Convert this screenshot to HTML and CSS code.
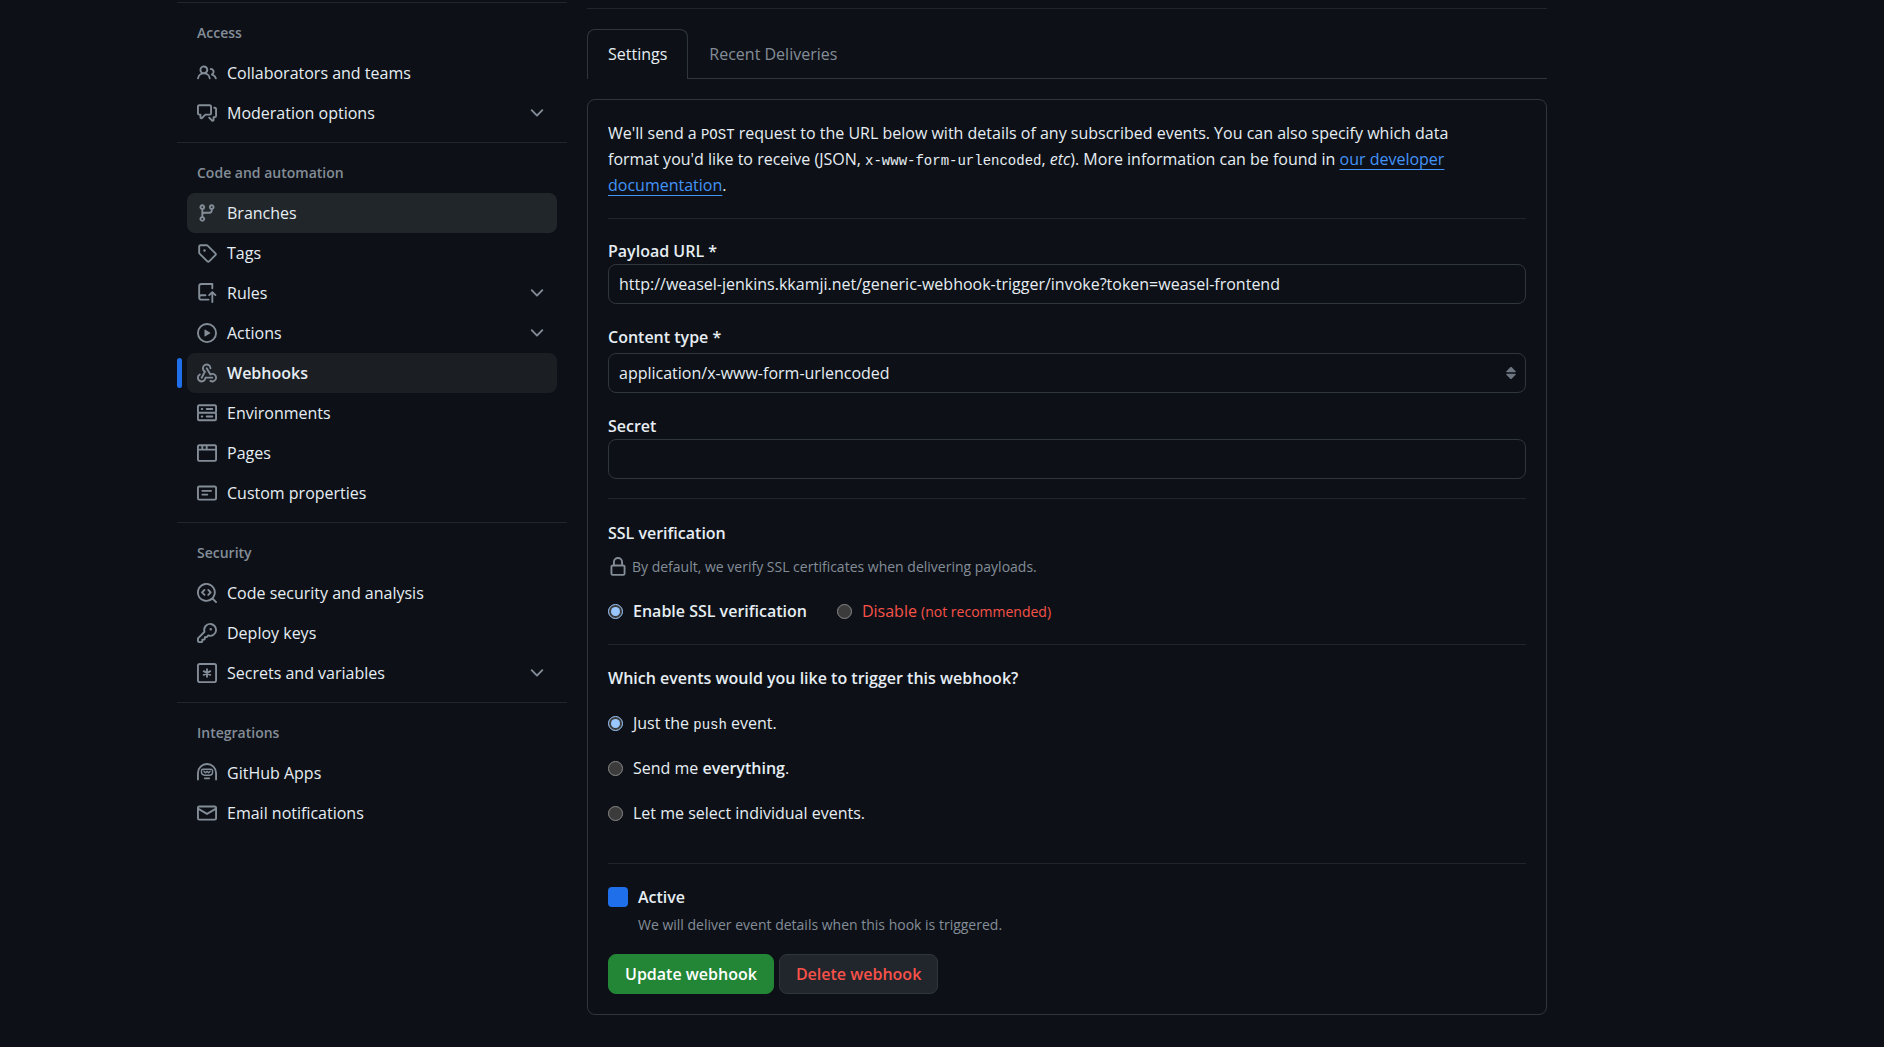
FILE: index.html
```
<!DOCTYPE html>
<html lang="en">
<head>
    <meta charset="UTF-8">
    <meta name="viewport" content="width=device-width, initial-scale=1.0">
    <title>Webhooks · Manage webhook</title>
    <link rel="stylesheet" href="styles.css">
</head>
<body>
    <!-- shared chevron for the expandable items -->
    <svg class="sprite" aria-hidden="true">
        <symbol id="chevron" viewBox="0 0 16 16">
            <path d="M12.78 5.22a.749.749 0 0 1 0 1.06l-4.25 4.25a.749.749 0 0 1-1.06 0L3.22 6.28a.749.749 0 1 1 1.06-1.06L8 8.939l3.72-3.719a.749.749 0 0 1 1.06 0Z"/>
        </symbol>
    </svg>

    <div class="layout">
        <nav class="sidebar" aria-label="Repository settings">
            <section class="nav-group">
                <h2 class="nav-title">Access</h2>
                <a href="#" class="nav-item">
                    <svg class="icon" viewBox="0 0 16 16"><path d="M2 5.5a3.5 3.5 0 1 1 5.898 2.549 5.508 5.508 0 0 1 3.034 4.084.75.75 0 1 1-1.482.235 4 4 0 0 0-7.9 0 .75.75 0 0 1-1.482-.236A5.507 5.507 0 0 1 3.102 8.05 3.493 3.493 0 0 1 2 5.5ZM11 4a3.001 3.001 0 0 1 2.22 5.018 5.01 5.01 0 0 1 2.56 3.012.749.749 0 0 1-.885.954.752.752 0 0 1-.549-.514 3.507 3.507 0 0 0-2.522-2.372.75.75 0 0 1-.574-.73v-.352a.75.75 0 0 1 .416-.672A1.5 1.5 0 0 0 11 5.5.75.75 0 0 1 11 4Zm-5.5-.5a2 2 0 1 0-.001 3.999A2 2 0 0 0 5.5 3.5Z"/></svg>
                    <span>Collaborators and teams</span>
                </a>
                <button type="button" class="nav-item">
                    <svg class="icon" viewBox="0 0 16 16"><path d="M1.75 1h8.5c.966 0 1.75.784 1.75 1.75v5.5A1.75 1.75 0 0 1 10.25 10H7.061l-2.574 2.573A1.458 1.458 0 0 1 2 11.543V10h-.25A1.75 1.75 0 0 1 0 8.25v-5.5C0 1.784.784 1 1.75 1ZM1.5 2.75v5.5c0 .138.112.25.25.25h1a.75.75 0 0 1 .75.75v2.19l2.72-2.72a.749.749 0 0 1 .53-.22h3.5a.25.25 0 0 0 .25-.25v-5.5a.25.25 0 0 0-.25-.25h-8.5a.25.25 0 0 0-.25.25Zm13 2a.25.25 0 0 0-.25-.25h-.5a.75.75 0 0 1 0-1.5h.5c.966 0 1.75.784 1.75 1.75v5.5A1.75 1.75 0 0 1 14.25 12H14v1.543a1.458 1.458 0 0 1-2.487 1.03L9.22 12.28a.749.749 0 0 1 .326-1.275.749.749 0 0 1 .734.215l2.22 2.22v-2.19a.75.75 0 0 1 .75-.75h1a.25.25 0 0 0 .25-.25Z"/></svg>
                    <span>Moderation options</span>
                    <svg class="icon chevron"><use href="#chevron"/></svg>
                </button>
            </section>

            <section class="nav-group">
                <h2 class="nav-title">Code and automation</h2>
                <a href="#" class="nav-item hovered">
                    <svg class="icon" viewBox="0 0 16 16"><path d="M9.5 3.25a2.25 2.25 0 1 1 3 2.122V6A2.5 2.5 0 0 1 10 8.5H6a1 1 0 0 0-1 1v1.128a2.251 2.251 0 1 1-1.5 0V5.372a2.25 2.25 0 1 1 1.5 0v1.836A2.493 2.493 0 0 1 6 7h4a1 1 0 0 0 1-1v-.628A2.25 2.25 0 0 1 9.5 3.25Zm-6 0a.75.75 0 1 0 1.5 0 .75.75 0 0 0-1.5 0Zm8.25-.75a.75.75 0 1 0 0 1.5.75.75 0 0 0 0-1.5ZM4.25 12a.75.75 0 1 0 0 1.5.75.75 0 0 0 0-1.5Z"/></svg>
                    <span>Branches</span>
                </a>
                <a href="#" class="nav-item">
                    <svg class="icon" viewBox="0 0 16 16"><path d="M1 7.775V2.75C1 1.784 1.784 1 2.75 1h5.025c.464 0 .91.184 1.238.513l6.25 6.25a1.75 1.75 0 0 1 0 2.474l-5.026 5.026a1.75 1.75 0 0 1-2.474 0l-6.25-6.25A1.752 1.752 0 0 1 1 7.775Zm1.5 0c0 .066.026.13.073.177l6.25 6.25a.25.25 0 0 0 .354 0l5.025-5.025a.25.25 0 0 0 0-.354l-6.25-6.25a.25.25 0 0 0-.177-.073H2.75a.25.25 0 0 0-.25.25ZM6 5a1 1 0 1 1 0 2 1 1 0 0 1 0-2Z"/></svg>
                    <span>Tags</span>
                </a>
                <button type="button" class="nav-item">
                    <svg class="icon" viewBox="0 0 16 16"><path d="M1 2.5A2.5 2.5 0 0 1 3.5 0h8.75a.75.75 0 0 1 .75.75v3.5a.75.75 0 0 1-1.5 0V1.5h-8a1 1 0 0 0-1 1v6.708A2.493 2.493 0 0 1 3.5 9h3.25a.75.75 0 0 1 0 1.5H3.5a1 1 0 0 0 0 2h5.75a.75.75 0 0 1 0 1.5H3.5A2.5 2.5 0 0 1 1 11.5Zm13.23 7.79h-.001l-1.224-1.224v6.184a.75.75 0 0 1-1.5 0V9.066L10.28 10.29a.75.75 0 0 1-1.06-1.061l2.505-2.504a.75.75 0 0 1 1.06 0L15.29 9.23a.751.751 0 0 1-.018 1.042.751.751 0 0 1-1.042.018Z"/></svg>
                    <span>Rules</span>
                    <svg class="icon chevron"><use href="#chevron"/></svg>
                </button>
                <button type="button" class="nav-item">
                    <svg class="icon" viewBox="0 0 16 16"><path d="M8 0a8 8 0 1 1 0 16A8 8 0 0 1 8 0ZM1.5 8a6.5 6.5 0 1 0 13 0 6.5 6.5 0 0 0-13 0Zm4.879-2.773 4.264 2.559a.25.25 0 0 1 0 .428l-4.264 2.559A.25.25 0 0 1 6 10.559V5.442a.25.25 0 0 1 .379-.215Z"/></svg>
                    <span>Actions</span>
                    <svg class="icon chevron"><use href="#chevron"/></svg>
                </button>
                <a href="#" class="nav-item current" aria-current="page">
                    <svg class="icon" viewBox="0 0 16 16"><path d="M5.5 4.25a2.25 2.25 0 0 1 4.5 0 .75.75 0 0 0 1.5 0 3.75 3.75 0 1 0-6.14 2.889l-2.272 4.258a.75.75 0 0 0 1.324.706L7 7.25a.75.75 0 0 0-.309-1.015A2.25 2.25 0 0 1 5.5 4.25Z"/><path d="M7.364 3.607a.75.75 0 0 1 1.03.257l2.608 4.349a3.75 3.75 0 1 1-.628 6.785.75.75 0 0 1 .752-1.299 2.25 2.25 0 1 0-.033-3.88.75.75 0 0 1-1.03-.256L7.107 4.636a.75.75 0 0 1 .257-1.03Z"/><path d="M2.9 8.776A.75.75 0 0 1 2.625 9.8 2.25 2.25 0 1 0 6 11.75a.75.75 0 0 1 .75-.751h5.5a.75.75 0 0 1 0 1.5H7.425a3.751 3.751 0 1 1-5.55-3.998.75.75 0 0 1 1.024.274Z"/></svg>
                    <span>Webhooks</span>
                </a>
                <a href="#" class="nav-item">
                    <svg class="icon" viewBox="0 0 16 16"><path d="M1.75 1h12.5c.966 0 1.75.784 1.75 1.75v4c0 .372-.116.717-.314 1 .198.283.314.628.314 1v4a1.75 1.75 0 0 1-1.75 1.75H1.75A1.75 1.75 0 0 1 0 12.75v-4c0-.358.109-.707.314-1a1.739 1.739 0 0 1-.314-1v-4C0 1.784.784 1 1.75 1ZM1.5 2.75v4c0 .138.112.25.25.25h12.5a.25.25 0 0 0 .25-.25v-4a.25.25 0 0 0-.25-.25H1.75a.25.25 0 0 0-.25.25Zm.25 5.75a.25.25 0 0 0-.25.25v4c0 .138.112.25.25.25h12.5a.25.25 0 0 0 .25-.25v-4a.25.25 0 0 0-.25-.25ZM7 4.75A.75.75 0 0 1 7.75 4h4.5a.75.75 0 0 1 0 1.5h-4.5A.75.75 0 0 1 7 4.75ZM7.75 10h4.5a.75.75 0 0 1 0 1.5h-4.5a.75.75 0 0 1 0-1.5ZM3 4.75A.75.75 0 0 1 3.75 4h.5a.75.75 0 0 1 0 1.5h-.5A.75.75 0 0 1 3 4.75ZM3.75 10h.5a.75.75 0 0 1 0 1.5h-.5a.75.75 0 0 1 0-1.5Z"/></svg>
                    <span>Environments</span>
                </a>
                <a href="#" class="nav-item">
                    <svg class="icon" viewBox="0 0 16 16"><path d="M0 2.75C0 1.784.784 1 1.75 1h12.5c.966 0 1.75.784 1.75 1.75v10.5A1.75 1.75 0 0 1 14.25 15H1.75A1.75 1.75 0 0 1 0 13.25ZM14.5 6h-13v7.25c0 .138.112.25.25.25h12.5a.25.25 0 0 0 .25-.25Zm-6-3.5v2h6V2.75a.25.25 0 0 0-.25-.25ZM5 2.5v2h2v-2Zm-3.25 0a.25.25 0 0 0-.25.25V4.5h2v-2Z"/></svg>
                    <span>Pages</span>
                </a>
                <a href="#" class="nav-item">
                    <svg class="icon" viewBox="0 0 16 16"><path d="M0 3.75C0 2.784.784 2 1.75 2h12.5c.966 0 1.75.784 1.75 1.75v8.5A1.75 1.75 0 0 1 14.25 14H1.75A1.75 1.75 0 0 1 0 12.25Zm1.75-.25a.25.25 0 0 0-.25.25v8.5c0 .138.112.25.25.25h12.5a.25.25 0 0 0 .25-.25v-8.5a.25.25 0 0 0-.25-.25ZM3.5 6.25a.75.75 0 0 1 .75-.75h7a.75.75 0 0 1 0 1.5h-7a.75.75 0 0 1-.75-.75Zm.75 2.25h4a.75.75 0 0 1 0 1.5h-4a.75.75 0 0 1 0-1.5Z"/></svg>
                    <span>Custom properties</span>
                </a>
            </section>

            <section class="nav-group">
                <h2 class="nav-title">Security</h2>
                <a href="#" class="nav-item">
                    <svg class="icon" viewBox="0 0 16 16"><path d="M8.47 4.97a.75.75 0 0 0 0 1.06L9.94 7.5 8.47 8.97a.75.75 0 1 0 1.06 1.06l2-2a.75.75 0 0 0 0-1.06l-2-2a.75.75 0 0 0-1.06 0ZM6.53 6.03a.75.75 0 0 0-1.06-1.06l-2 2a.75.75 0 0 0 0 1.06l2 2a.75.75 0 1 0 1.06-1.06L5.06 7.5l1.47-1.47Z"/><path d="M12.246 13.307a7.501 7.501 0 1 1 1.06-1.06l2.474 2.473a.749.749 0 0 1-.326 1.275.749.749 0 0 1-.734-.215ZM1.5 7.5a6.002 6.002 0 0 0 3.608 5.504 6.002 6.002 0 0 0 6.486-1.117.748.748 0 0 1 .292-.293A6 6 0 1 0 1.5 7.5Z"/></svg>
                    <span>Code security and analysis</span>
                </a>
                <a href="#" class="nav-item">
                    <svg class="icon" viewBox="0 0 16 16"><path d="M10.5 0a5.499 5.499 0 1 1-1.288 10.848l-.932.932a.749.749 0 0 1-.53.22H7v.75a.749.749 0 0 1-.22.53l-.5.5a.749.749 0 0 1-.53.22H5v.75a.749.749 0 0 1-.22.53l-.5.5a.749.749 0 0 1-.53.22h-2A1.75 1.75 0 0 1 0 14.25v-2c0-.199.079-.389.22-.53l4.932-4.932A5.5 5.5 0 0 1 10.5 0Zm-4 5.5c-.001.431.069.86.205 1.269a.75.75 0 0 1-.181.768L1.5 12.56v1.69c0 .138.112.25.25.25h1.69l.06-.06v-1.19a.75.75 0 0 1 .75-.75h1.19l.06-.06v-1.19a.75.75 0 0 1 .75-.75h1.19l1.023-1.025a.75.75 0 0 1 .768-.18A4 4 0 1 0 6.5 5.5ZM11 6a1 1 0 1 1 0-2 1 1 0 0 1 0 2Z"/></svg>
                    <span>Deploy keys</span>
                </a>
                <button type="button" class="nav-item">
                    <svg class="icon line" viewBox="0 0 16 16"><rect x=".75" y=".75" width="14.5" height="14.5" rx="1.5"/><path d="M8 5v6M5.4 6.500l5.200 3M10.600 6.500l-5.200 3"/></svg>
                    <span>Secrets and variables</span>
                    <svg class="icon chevron"><use href="#chevron"/></svg>
                </button>
            </section>

            <section class="nav-group">
                <h2 class="nav-title">Integrations</h2>
                <a href="#" class="nav-item">
                    <svg class="icon line" viewBox="0 0 16 16"><path d="M.75 13.25V8a7.25 7.25 0 0 1 14.5 0v5.25M6.25 12.25h3.5"/><path class="thin" d="M4.75 5h6.5a1.200 1.200 0 0 1 1.200 1.200v1.100a2.500 2.500 0 0 1-2.500 2.500h-3.900a2.500 2.500 0 0 1-2.500-2.500v-1.100a1.200 1.200 0 0 1 1.200-1.200ZM5.500 6.600 6.750 7.800 8 6.700l1.250 1.100 1.250-1.200"/></svg>
                    <span>GitHub Apps</span>
                </a>
                <a href="#" class="nav-item">
                    <svg class="icon" viewBox="0 0 16 16"><path d="M1.75 2h12.5c.966 0 1.75.784 1.75 1.75v8.5A1.75 1.75 0 0 1 14.25 14H1.75A1.75 1.75 0 0 1 0 12.25v-8.5C0 2.784.784 2 1.75 2ZM1.5 12.251c0 .138.112.25.25.25h12.5a.25.25 0 0 0 .25-.25V5.809L8.38 9.397a.75.75 0 0 1-.76 0L1.5 5.809v6.442Zm13-8.181v-.32a.25.25 0 0 0-.25-.25H1.75a.25.25 0 0 0-.25.25v.32L8 7.88Z"/></svg>
                    <span>Email notifications</span>
                </a>
            </section>
        </nav>

        <main class="content">
            <nav class="tabs" aria-label="Webhook">
                <a href="#" class="tab selected" aria-current="page">Settings</a>
                <a href="#" class="tab">Recent Deliveries</a>
            </nav>

            <form class="box">
                <p class="intro">We'll send a <code>POST</code> request to the URL below with details of any subscribed events. You can also specify which data format you'd like to receive (JSON, <code>x-www-form-urlencoded</code>, <em>etc</em>). More information can be found in <a href="#">our developer documentation</a>.</p>

                <div class="fields">
                    <div class="field">
                        <label for="payload-url">Payload URL *</label>
                        <input type="text" id="payload-url" class="control" value="http://weasel-jenkins.kkamji.net/generic-webhook-trigger/invoke?token=weasel-frontend">
                    </div>
                    <div class="field">
                        <label for="content-type">Content type *</label>
                        <div class="select-wrap">
                            <select id="content-type" class="control">
                                <option>application/x-www-form-urlencoded</option>
                                <option>application/json</option>
                            </select>
                            <svg class="select-arrow" viewBox="0 0 10 12"><path d="M4 .4a1.4 1.4 0 0 1 2 0L9.6 4.200c.5.5.2 1-.4 1H.8c-.6 0-.9-.5-.4-1ZM4 11.600a1.400 1.400 0 0 0 2 0L9.600 7.800c.5-.5.2-1-.4-1H.8c-.6 0-.9.5-.4 1Z"/></svg>
                        </div>
                    </div>
                    <div class="field">
                        <label for="secret">Secret</label>
                        <input type="text" id="secret" class="control">
                    </div>
                </div>

                <section class="ssl">
                    <h3>SSL verification</h3>
                    <p class="note">
                        <svg class="icon" viewBox="0 0 16 16"><path d="M4 4a4 4 0 0 1 8 0v2h.25c.966 0 1.75.784 1.75 1.75v5.5A1.75 1.75 0 0 1 12.25 15h-8.5A1.75 1.75 0 0 1 2 13.25v-5.5C2 6.784 2.784 6 3.75 6H4Zm8.25 3.5h-8.5a.25.25 0 0 0-.25.25v5.5c0 .138.112.25.25.25h8.5a.25.25 0 0 0 .25-.25v-5.5a.25.25 0 0 0-.25-.25ZM10.5 6V4a2.5 2.5 0 1 0-5 0v2Z"/></svg>
                        By default, we verify SSL certificates when delivering payloads.
                    </p>
                    <div class="ssl-options">
                        <label class="choice"><input type="radio" name="ssl" checked><strong>Enable SSL verification</strong></label>
                        <label class="choice danger"><input type="radio" name="ssl"><span>Disable <small>(not recommended)</small></span></label>
                    </div>
                </section>

                <section class="events">
                    <h3>Which events would you like to trigger this webhook?</h3>
                    <label class="choice"><input type="radio" name="events" checked><span>Just the <code>push</code> event.</span></label>
                    <label class="choice"><input type="radio" name="events"><span>Send me <strong>everything</strong>.</span></label>
                    <label class="choice"><input type="radio" name="events"><span>Let me select individual events.</span></label>
                </section>

                <section class="active">
                    <input type="checkbox" id="active" checked>
                    <label for="active">Active</label>
                    <p>We will deliver event details when this hook is triggered.</p>
                </section>

                <div class="actions">
                    <button type="submit" class="btn btn-primary">Update webhook</button>
                    <button type="button" class="btn btn-danger">Delete webhook</button>
                </div>
            </form>
        </main>
    </div>
</body>
</html>
```
FILE: styles.css
```
* {
    margin: 0;
    padding: 0;
    box-sizing: border-box;
}

:root {
    color-scheme: dark;
    --bg: #0d1117;
    --text: #e6edf3;
    --muted: #848d97;
    --border: #30363d;
    --border-muted: #21262d;
    --blue: #1f6feb;
    --link: #4493f8;
    --red: #f85149;
}

body {
    font-family: 'Segoe UI', 'Open Sans', 'Noto Sans', sans-serif;
    font-size: 16px;
    line-height: 26px;
    color: var(--text);
    background: var(--bg);
}

button,
input,
select {
    font: inherit;
    color: inherit;
}

code {
    font-family: 'Liberation Mono', monospace;
    font-size: 14px;
    line-height: 1;
}

.sprite {
    display: none;
}

.icon {
    flex: none;
    width: 20px;
    height: 20px;
    fill: var(--muted);
}

.icon.line {
    fill: none;
    stroke: var(--muted);
    stroke-width: 1.5;
    stroke-linecap: round;
    stroke-linejoin: round;
}

.icon .thin {
    stroke-width: 1.1;
}

.layout {
    display: grid;
    grid-template-columns: 390px minmax(0, 1fr);
    gap: 20px;
    padding: 2px 337px 32px 177px;
}

/* Sidebar */
.nav-group {
    padding: 10px 10px 9px;
    border-top: 1px solid var(--border-muted);
}

.nav-title {
    padding: 10px;
    font-size: 14px;
    font-weight: 600;
    line-height: 20px;
    color: var(--muted);
}

.nav-item {
    position: relative;
    display: flex;
    align-items: center;
    gap: 10px;
    width: 100%;
    height: 40px;
    padding: 0 10px;
    border: none;
    border-radius: 8px;
    background: none;
    text-align: left;
    text-decoration: none;
    color: var(--text);
    cursor: pointer;
}

.nav-item:hover,
.nav-item.hovered {
    background: #21262a;
}

.nav-item.current {
    background: #1b1f24;
    font-weight: 600;
}

.nav-item.current::before {
    content: '';
    position: absolute;
    top: 5px;
    left: -10px;
    width: 5px;
    height: 30px;
    border-radius: 8px;
    background: var(--blue);
}

.chevron {
    margin-left: auto;
}

/* Main column */
.content {
    margin-top: 6px;
    padding-top: 20px;
    border-top: 1px solid var(--border-muted);
}

.tabs {
    display: flex;
    margin-bottom: 20px;
    box-shadow: inset 0 -1px 0 var(--border);
}

.tab {
    height: 50px;
    padding: 11px 20px;
    border: 1px solid transparent;
    border-bottom: none;
    text-decoration: none;
    color: var(--muted);
}

.tab.selected {
    border-color: var(--border);
    border-radius: 8px 8px 0 0;
    background: var(--bg);
    color: var(--text);
}

.box {
    padding: 20px;
    border: 1px solid var(--border);
    border-radius: 8px;
}

.intro {
    padding: 0 40px 20px 0;
}

.intro a {
    color: var(--link);
    text-underline-offset: 4px;
}

.fields {
    display: grid;
    gap: 20px;
    padding: 19px 0;
    border-top: 1px solid var(--border-muted);
}

.field label {
    display: block;
    font-weight: 600;
}

.control {
    display: block;
    width: 100%;
    height: 40px;
    padding: 0 10px;
    border: 1px solid var(--border);
    border-radius: 8px;
    background: var(--bg);
}

.select-wrap {
    position: relative;
    margin-top: 3px;
}

select.control {
    appearance: none;
}

.select-arrow {
    position: absolute;
    top: 14px;
    right: 10px;
    width: 10px;
    height: 12px;
    fill: #6e7681;
    pointer-events: none;
}

h3 {
    font-size: 16px;
    font-weight: 600;
}

strong {
    font-weight: 600;
}

input[type="radio"] {
    flex: none;
    width: 15px;
    height: 15px;
}

.choice {
    display: flex;
    align-items: center;
    gap: 10px;
}

.ssl {
    padding: 21px 0 20px;
    border-top: 1px solid var(--border-muted);
}

.note {
    display: flex;
    align-items: center;
    gap: 4px;
    padding: 8px 0;
    font-size: 14px;
    color: var(--muted);
}

.ssl-options {
    display: flex;
    gap: 30px;
    padding-top: 10px;
}

.danger {
    color: var(--red);
}

.danger small {
    font-size: 14px;
    line-height: 1;
}

.events {
    display: grid;
    gap: 19px;
    padding: 20px 0 37px;
    border-top: 1px solid var(--border-muted);
}

.active {
    display: grid;
    grid-template-columns: 20px 1fr;
    gap: 2px 10px;
    align-items: center;
    padding: 20px 0 16px;
    border-top: 1px solid var(--border-muted);
}

.active input {
    appearance: none;
    width: 20px;
    height: 20px;
    border-radius: 4px;
    background: var(--blue);
}

.active label {
    font-weight: 600;
}

.active p {
    grid-column: 2;
    font-size: 14px;
    color: var(--muted);
}

.actions {
    display: flex;
    gap: 5px;
}

.btn {
    height: 40px;
    padding: 0 16px;
    border: 1px solid var(--border);
    border-radius: 8px;
    font-weight: 600;
    cursor: pointer;
}

.btn-primary {
    border-color: #238636;
    background: #238636;
    color: white;
}

.btn-danger {
    background: var(--border-muted);
    color: var(--red);
}
```
